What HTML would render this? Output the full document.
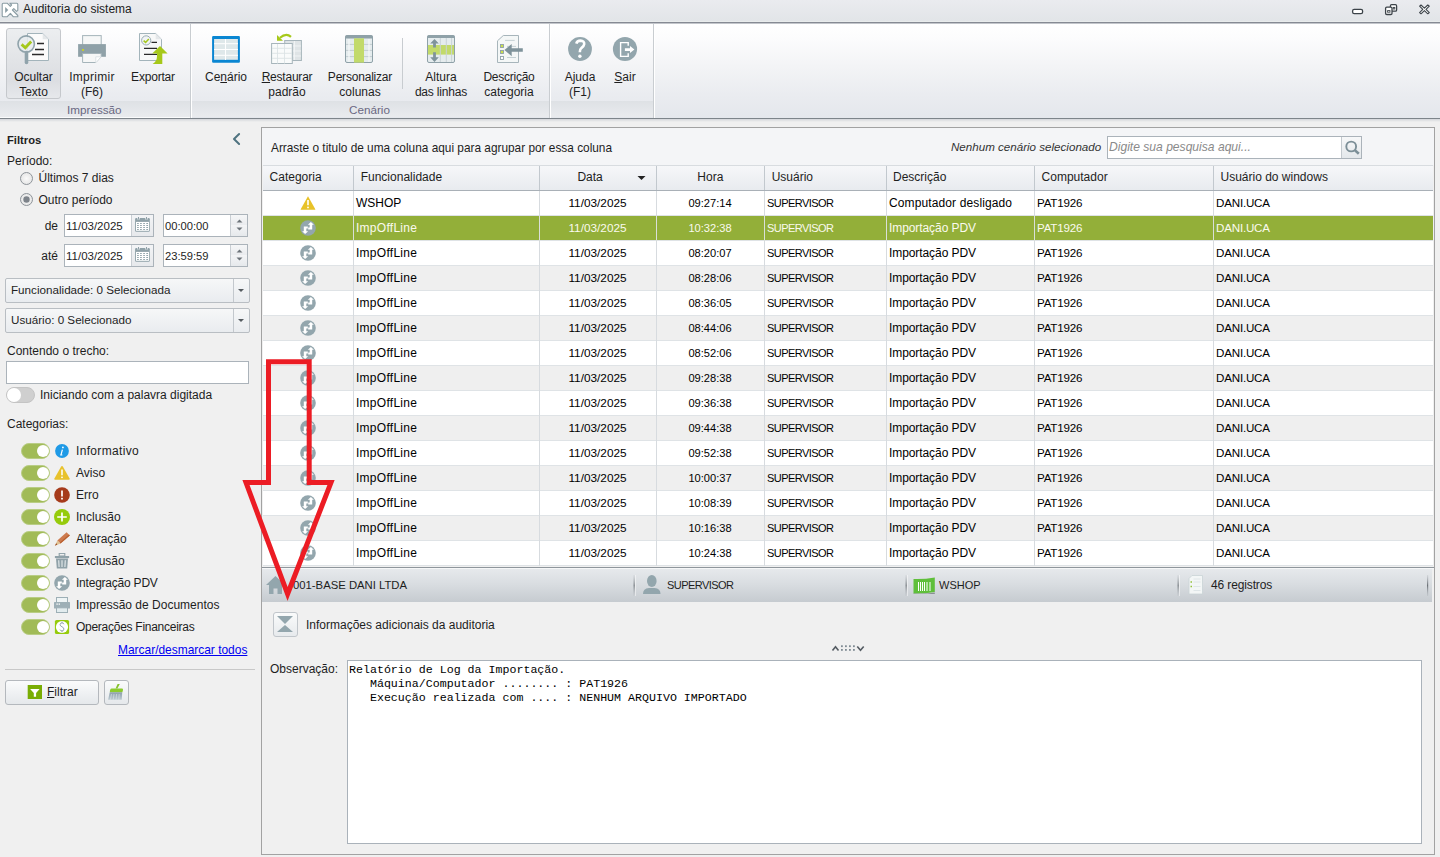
<!DOCTYPE html>
<html><head><meta charset="utf-8">
<style>
*{box-sizing:border-box;margin:0;padding:0}
html,body{width:1440px;height:857px;overflow:hidden;background:#f0f0f0;font-family:"Liberation Sans",sans-serif;font-size:11.7px;color:#1e1e1e}
.a{position:absolute}
.t{position:absolute;white-space:pre;line-height:15px;font-size:12px;margin-top:1px}
#title{left:0;top:0;width:1440px;height:22px;background:linear-gradient(#eaebef 0%,#e2e5e8 95%,#e9ecec 95%)}
#titleline{left:0;top:22px;width:1440px;height:2px;background:linear-gradient(#868a93 50%,#c3c6cb 50%)}
#ribbon{left:0;top:24px;width:1440px;height:94px;background:linear-gradient(#ffffff 0%,#fcfcfd 15%,#f3f4f6 45%,#eaecf0 75%,#e4e7ec 100%)}
#ribbonline{left:0;top:118px;width:1440px;height:1px;background:#7d848a}
#ribbonshade{left:0;top:119px;width:1440px;height:3px;background:linear-gradient(#d3d6da,#f0f0f0)}
.band{position:absolute;top:101px;height:16px;background:linear-gradient(#dee1e5,#e9ebee)}
.gsep{position:absolute;top:24px;height:94px;width:2px;background:linear-gradient(90deg,#c9cdd1 50%,#ffffff 50%)}
.rb{position:absolute;text-align:center;color:#222}
.glabel{position:absolute;top:102px;line-height:15px;color:#6a6882;white-space:pre;font-size:11.7px}
.u{text-decoration:underline}
</style></head><body>
<div id="title" class="a"></div>
<div id="titleline" class="a"></div>
<div id="ribbon" class="a"></div>
<div id="ribbonline" class="a"></div>
<div id="ribbonshade" class="a"></div>
<div class="band" style="left:0;width:190px"></div>
<div class="band" style="left:192px;width:357px"></div>
<div class="band" style="left:551px;width:102px"></div>
<div class="a" style="left:0;top:117px;width:190px;height:1px;background:#fafbfc"></div>
<div class="gsep" style="left:190px"></div>
<div class="gsep" style="left:549px"></div>
<div class="gsep" style="left:653px"></div>
<div class="glabel" style="left:67px">Impressão</div>
<div class="glabel" style="left:349px">Cenário</div>


<!-- pressed button -->
<div class="a" style="left:6px;top:28px;width:55px;height:71px;border:1px solid #c5c8cc;border-radius:3px;background:linear-gradient(#eceef0 0%,#e2e4e7 45%,#dcdee2 75%,#e6e8eb 100%)"></div>
<svg class="a" style="left:0;top:0" width="700" height="120" viewBox="0 0 700 120">
 <!-- title icon -->
 <g fill="#fff" stroke="#8a9ca4" stroke-width="1.1" stroke-linejoin="round">
  <path d="M3.2,3.2 H7.2 L10.3,6.3 L11.6,5 L9.8,3.2 H16.8 Q17.8,3.2 17.8,4.2 V10.3 L16.6,11.4 L13.8,8.6 L12.4,10 L17.8,15.5 V16.8 H13.4 L10.4,13.3 L7,16.8 H3.2 Q2.2,16.8 2.2,15.8 V4.2 Q2.2,3.2 3.2,3.2 Z"/>
 </g>
 <path d="M5.2,7 L8.3,10 L5.2,13 Z" fill="#8a9ca4"/>
 <!-- Ocultar texto icon -->
 <path d="M27.5,33.5 H42.7 L48.5,39.3 V60.5 H27.5 Z" fill="#fbfbfb" stroke="#a3b4bb" stroke-width="1"/>
 <path d="M42.7,33.5 V39.3 H48.5" fill="#e4e7e9" stroke="none"/>
 <path d="M37,43.5 H44 M35,49.5 H44 M32,54.5 H44" stroke="#2a2a2a" stroke-width="1.4"/>
 <circle cx="26.2" cy="44.1" r="8.2" fill="#e8ecee" fill-opacity="0.85" stroke="#90a3ab" stroke-width="1.6"/>
 <path d="M21.6,44.4 L25.3,47.8 L31.2,41.5" fill="none" stroke="#a5c81c" stroke-width="2.8"/>
 <path d="M26.5,52.6 V62.5" stroke="#90a3ab" stroke-width="3.6" stroke-linecap="round"/>
 <!-- printer -->
 <rect x="82.6" y="35.6" width="18.6" height="10" fill="#f6f7f7" stroke="#a5b4ba" stroke-width="1"/>
 <rect x="78.1" y="44.1" width="27.8" height="12.7" fill="#8fa1a8"/>
 <rect x="82" y="49" width="2" height="1.9" fill="#c6d02a"/>
 <path d="M82.6,53.5 H101.2 V56.8 L95.8,62.5 H82.6 Z" fill="#f6f7f7" stroke="#a5b4ba" stroke-width="1"/>
 <path d="M95.8,62.5 V56.8 H101.2" fill="#fff" stroke="#dde3e6" stroke-width="1"/>
 <!-- exportar -->
 <path d="M139.5,33.5 H155.7 L161.5,39.3 V60.5 H139.5 Z" fill="#f7f8f8" stroke="#a3b4bb" stroke-width="1"/>
 <path d="M155.7,33.5 V39.3 H161.5" fill="#e4e7e9" stroke="none"/>
 <circle cx="146.2" cy="40.4" r="4.6" fill="#f1f4f5" stroke="#9aacb3" stroke-width="1"/>
 <path d="M143.6,40.6 L145.6,42.4 L148.8,39" fill="none" stroke="#a5c81c" stroke-width="1.5"/>
 <path d="M151.5,42.4 H157 M144,48.4 H157 M144,54.3 H157" stroke="#2a2a2a" stroke-width="1.2"/>
 <path d="M152.2,53.6 L160,46 L167.6,53.6 H162.3 V64 H152.6 Q157,61 157,56.5 V53.6 Z" fill="#a6c81a"/>
 <!-- cenario -->
 <rect x="212.1" y="36" width="27.8" height="26.8" rx="1" fill="#0a86d2"/>
 <rect x="214.1" y="39" width="23.8" height="20.8" fill="#dfe8ea"/>
 <path d="M214,43.7 H238 M214,49.5 H238 M214,55.3 H238 M225.5,39 V60" stroke="#ffffff" stroke-width="1"/>
 <!-- restaurar -->
 <rect x="284.7" y="40.5" width="16.7" height="20" fill="#dfe4e6" stroke="#a7b5bb" stroke-width="1"/>
 <path d="M285,46 H301 M285,51 H301 M285,56 H301 M294.5,41 V60" stroke="#f4f6f7" stroke-width="0.8"/>
 <rect x="271.6" y="43.5" width="20.7" height="20" fill="#f9fbfb" stroke="#a7b5bb" stroke-width="1"/>
 <path d="M272,48.3 H292 M272,53.3 H292 M272,58.3 H292 M277.5,44 V63.5 M284.5,44 V63.5" stroke="#dbe3e5" stroke-width="0.9"/>
 <path d="M291,36.8 Q286,32.5 280,37.8" fill="none" stroke="#a6c81a" stroke-width="2.2"/>
 <path d="M277,35 V40.8 H283 Z" fill="#a6c81a"/>
 <!-- personalizar -->
 <rect x="345.5" y="35.5" width="27" height="27" rx="1.5" fill="#e5ecee" stroke="#8fa1a8" stroke-width="1"/>
 <rect x="345.5" y="35.5" width="27" height="3" fill="#8fa1a8"/>
 <path d="M346,44.4 H372 M346,50.4 H372 M346,56.6 H372" stroke="#c3cdd1" stroke-width="1"/>
 <path d="M349,39 V62 M369,39 V62" stroke="#f6f9f9" stroke-width="1.2"/>
 <rect x="354" y="38.3" width="10" height="24.3" fill="#c2da6a"/>
 <!-- small separator -->
 <rect x="402" y="38" width="1" height="51" fill="#c8ccd0"/>
 <!-- altura -->
 <rect x="427.5" y="35.5" width="27" height="27" rx="1.5" fill="#e5ecee" stroke="#8fa1a8" stroke-width="1"/>
 <rect x="427.5" y="35.5" width="27" height="2.5" fill="#8fa1a8"/>
 <rect x="428" y="45" width="26" height="9.6" fill="#c2da6a"/>
 <path d="M440.3,38 V62 M446.3,38 V62 M451.6,38 V62" stroke="#c9d3d6" stroke-width="1"/>
 <path d="M434.5,38.9 L438.8,43.4 H435.9 V47.5 H433.1 V43.4 H430.2 Z M434.5,61.9 L438.8,57.2 H435.9 V52.2 H433.1 V57.2 H430.2 Z" fill="#7f939b"/>
 <!-- descricao -->
 <path d="M503.3,35.5 H518.5 V62.5 H497.5 V40.8 Z" fill="#f4f7f7" stroke="#a7b5bb" stroke-width="1"/>
 <path d="M505,40.4 H514.7 M507,46.4 H516 M507,57.5 H516" stroke="#b9c6cb" stroke-width="0.8"/>
 <rect x="500.5" y="44.5" width="3" height="3" fill="#cbe04a" stroke="#8fa1a8" stroke-width="0.9"/>
 <rect x="500.5" y="50.5" width="3" height="3" fill="#cbe04a" stroke="#8fa1a8" stroke-width="0.9"/>
 <rect x="500.5" y="56.5" width="3" height="3" fill="#fff" stroke="#8fa1a8" stroke-width="0.9"/>
 <path d="M504.4,50 L511.7,44 V48.2 H522.8 V51.7 H511.7 V56.2 Z" fill="#7f939b"/>
 <!-- ajuda -->
 <circle cx="580" cy="49" r="11.9" fill="#93a6ad"/>
 <path d="M576.3,43.6 Q577,40.6 580.5,40.6 Q584.5,40.8 584.2,44.2 Q584,46.2 581.6,47.8 Q579.8,49.2 579.8,52.2" fill="none" stroke="#fff" stroke-width="2.6"/>
 <circle cx="579.9" cy="56.3" r="1.7" fill="#fff"/>
 <!-- sair -->
 <circle cx="625" cy="49" r="12.1" fill="#93a6ad"/>
 <path d="M628.2,45.8 V42.6 H620.6 V56.4 H628.2 V53.2" fill="none" stroke="#fff" stroke-width="1.4"/>
 <path d="M624.9,48.3 H630 V46 L634.4,49.6 L630,53.1 V50.9 H624.9 Z" fill="#fff"/>
</svg>
<!-- window controls -->
<svg class="a" style="left:1340px;top:0" width="100" height="22" viewBox="1340 0 100 22">
 <rect x="1352.6" y="9.4" width="10" height="4.2" rx="1.6" fill="#fff" stroke="#3c4349" stroke-width="1.3"/>
 <rect x="1390.4" y="4.7" width="6.2" height="6.4" rx="1.2" fill="#fff" stroke="#3c4349" stroke-width="1.3"/>
 <rect x="1393.2" y="7.4" width="1.6" height="1.6" fill="#fff" stroke="#3c4349" stroke-width="0.9"/>
 <rect x="1385.6" y="7.1" width="6.4" height="7.4" rx="1.2" fill="#fff" stroke="#3c4349" stroke-width="1.3"/>
 <rect x="1387.6" y="10.6" width="2.4" height="1.6" fill="#fff" stroke="#3c4349" stroke-width="0.9"/>
 <path d="M1419.6,6.2 L1421,5 L1424.4,8.1 L1427.8,5 L1429.3,6.2 L1426,9.4 L1429.3,12.6 L1427.8,13.8 L1424.4,10.7 L1421,13.8 L1419.6,12.6 L1422.8,9.4 Z" fill="#fff" stroke="#3c4349" stroke-width="1.1" stroke-linejoin="round"/>
</svg>
<!-- ribbon labels -->
<div class="t" style="left:0;top:69px;width:67px;text-align:center">Ocultar</div>
<div class="t" style="left:0;top:84px;width:67px;text-align:center">Texto</div>
<div class="t" style="left:62px;top:69px;width:60px;text-align:center;letter-spacing:0.28px">Imprimir</div>
<div class="t" style="left:62px;top:84px;width:60px;text-align:center">(F6)</div>
<div class="t" style="left:123px;top:69px;width:60px;text-align:center;letter-spacing:-0.2px">Exportar</div>
<div class="t" style="left:196px;top:69px;width:60px;text-align:center">Ce<span class="u">n</span>ário</div>
<div class="t" style="left:257px;top:69px;width:60px;text-align:center;letter-spacing:-0.22px"><span class="u">R</span>estaurar</div>
<div class="t" style="left:257px;top:84px;width:60px;text-align:center">padrão</div>
<div class="t" style="left:320px;top:69px;width:80px;text-align:center;letter-spacing:-0.2px">Personalizar</div>
<div class="t" style="left:320px;top:84px;width:80px;text-align:center">colunas</div>
<div class="t" style="left:406px;top:69px;width:70px;text-align:center">Altura</div>
<div class="t" style="left:406px;top:84px;width:70px;text-align:center;letter-spacing:-0.18px">das linhas</div>
<div class="t" style="left:474px;top:69px;width:70px;text-align:center;letter-spacing:-0.25px">Descrição</div>
<div class="t" style="left:474px;top:84px;width:70px;text-align:center">categoria</div>
<div class="t" style="left:555px;top:69px;width:50px;text-align:center">Ajuda</div>
<div class="t" style="left:555px;top:84px;width:50px;text-align:center">(F1)</div>
<div class="t" style="left:605px;top:69px;width:40px;text-align:center"><span class="u">S</span>air</div>


<!-- ============ LEFT PANEL ============ -->
<div class="t" style="left:7px;top:132px;font-weight:bold;font-size:11.2px">Filtros</div>
<svg class="a" style="left:228px;top:128px" width="20" height="22" viewBox="228 128 20 22"><path d="M239.1,134 L234,139 L239.1,144" fill="none" stroke="#4f7380" stroke-width="2" stroke-linecap="round" stroke-linejoin="round"/></svg>
<div class="t" style="left:7px;top:153px">Período:</div>
<svg class="a" style="left:18px;top:170px" width="18" height="40" viewBox="18 170 18 40">
 <defs><radialGradient id="rg1" cx="50%" cy="50%" r="50%"><stop offset="0" stop-color="#fafafa"/><stop offset="1" stop-color="#e6e6e6"/></radialGradient></defs>
 <circle cx="26.5" cy="178.5" r="6" fill="url(#rg1)" stroke="#8e949a" stroke-width="1"/>
 <circle cx="26.5" cy="199.5" r="6" fill="url(#rg1)" stroke="#8e949a" stroke-width="1"/>
 <circle cx="26.5" cy="199.5" r="3.2" fill="#7d838a"/>
</svg>
<div class="t" style="left:38.5px;top:170px">Últimos 7 dias</div>
<div class="t" style="left:38.5px;top:192px">Outro período</div>
<div class="t" style="left:0;top:218px;width:58px;text-align:right">de</div>
<div class="t" style="left:0;top:248px;width:58px;text-align:right">até</div>

<div class="a" style="left:64px;top:214px;width:90px;height:23px;border:1px solid #abb3ba;background:#fff"></div>
<div class="a" style="left:131px;top:215px;width:22px;height:21px;border-left:1px solid #c9ced3;background:linear-gradient(#f3f4f6,#e7e9ec)"></div>
<svg class="a" style="left:134px;top:216px" width="18" height="18" viewBox="0 0 18 18"><rect x="1.1" y="2.1" width="14.7" height="13.7" rx="1.2" fill="#8fa1a8"/><rect x="2" y="5.9" width="13" height="8.9" fill="#fff"/><path d="M3.3,2 h2.4 v1.6 h-2.4z M11.3,2 h2.4 v1.6 h-2.4z" fill="#eef0f2"/><path d="M4.5,1 V3.4 M12.5,1 V3.4" stroke="#8fa1a8" stroke-width="1"/><g fill="#8fa1a8"><rect x="3" y="6.9" width="1.9" height="1.1" rx="0.5"/><rect x="6" y="6.9" width="1.9" height="1.1" rx="0.5"/><rect x="9.1" y="6.9" width="1.9" height="1.1" rx="0.5"/><rect x="12.2" y="6.9" width="1.9" height="1.1" rx="0.5"/><rect x="3" y="8.9" width="1.9" height="1.1" rx="0.5"/><rect x="6" y="8.9" width="1.9" height="1.1" rx="0.5"/><rect x="9.1" y="8.9" width="1.9" height="1.1" rx="0.5"/><rect x="12.2" y="8.9" width="1.9" height="1.1" rx="0.5"/><rect x="3" y="10.9" width="1.9" height="1.1" rx="0.5"/><rect x="6" y="10.9" width="1.9" height="1.1" rx="0.5"/><rect x="9.1" y="10.9" width="1.9" height="1.1" rx="0.5"/><rect x="12.2" y="10.9" width="1.9" height="1.1" rx="0.5"/><rect x="3" y="13" width="1.9" height="1.1" rx="0.5"/><rect x="6" y="13" width="1.9" height="1.1" rx="0.5"/><rect x="9.1" y="13" width="1.9" height="1.1" rx="0.5"/><rect x="12.2" y="13" width="1.9" height="1.1" rx="0.5"/></g></svg>
<div class="t" style="left:66px;top:218px;font-size:11.5px;letter-spacing:0px">11/03/2025</div>
<div class="a" style="left:163px;top:214px;width:85px;height:23px;border:1px solid #abb3ba;background:#fff"></div>
<div class="a" style="left:230px;top:215px;width:17px;height:21px;border-left:1px solid #c9ced3;background:linear-gradient(#f5f6f7,#e9ebee 50%,#f3f4f6 50%,#e6e9ec)"></div>
<svg class="a" style="left:230px;top:214px" width="18" height="23" viewBox="0 0 18 23"><path d="M6.5,8.5 L9.5,5.5 L12.5,8.5 Z M6.5,13.5 L12.5,13.5 L9.5,16.5 Z" fill="#6e757b"/></svg>
<div class="t" style="left:165px;top:218px;font-size:11.2px">00:00:00</div>

<div class="a" style="left:64px;top:244px;width:90px;height:23px;border:1px solid #abb3ba;background:#fff"></div>
<div class="a" style="left:131px;top:245px;width:22px;height:21px;border-left:1px solid #c9ced3;background:linear-gradient(#f3f4f6,#e7e9ec)"></div>
<svg class="a" style="left:134px;top:246px" width="18" height="18" viewBox="0 0 18 18"><rect x="1.1" y="2.1" width="14.7" height="13.7" rx="1.2" fill="#8fa1a8"/><rect x="2" y="5.9" width="13" height="8.9" fill="#fff"/><path d="M3.3,2 h2.4 v1.6 h-2.4z M11.3,2 h2.4 v1.6 h-2.4z" fill="#eef0f2"/><path d="M4.5,1 V3.4 M12.5,1 V3.4" stroke="#8fa1a8" stroke-width="1"/><g fill="#8fa1a8"><rect x="3" y="6.9" width="1.9" height="1.1" rx="0.5"/><rect x="6" y="6.9" width="1.9" height="1.1" rx="0.5"/><rect x="9.1" y="6.9" width="1.9" height="1.1" rx="0.5"/><rect x="12.2" y="6.9" width="1.9" height="1.1" rx="0.5"/><rect x="3" y="8.9" width="1.9" height="1.1" rx="0.5"/><rect x="6" y="8.9" width="1.9" height="1.1" rx="0.5"/><rect x="9.1" y="8.9" width="1.9" height="1.1" rx="0.5"/><rect x="12.2" y="8.9" width="1.9" height="1.1" rx="0.5"/><rect x="3" y="10.9" width="1.9" height="1.1" rx="0.5"/><rect x="6" y="10.9" width="1.9" height="1.1" rx="0.5"/><rect x="9.1" y="10.9" width="1.9" height="1.1" rx="0.5"/><rect x="12.2" y="10.9" width="1.9" height="1.1" rx="0.5"/><rect x="3" y="13" width="1.9" height="1.1" rx="0.5"/><rect x="6" y="13" width="1.9" height="1.1" rx="0.5"/><rect x="9.1" y="13" width="1.9" height="1.1" rx="0.5"/><rect x="12.2" y="13" width="1.9" height="1.1" rx="0.5"/></g></svg>
<div class="t" style="left:66px;top:248px;font-size:11.5px;letter-spacing:0px">11/03/2025</div>
<div class="a" style="left:163px;top:244px;width:85px;height:23px;border:1px solid #abb3ba;background:#fff"></div>
<div class="a" style="left:230px;top:245px;width:17px;height:21px;border-left:1px solid #c9ced3;background:linear-gradient(#f5f6f7,#e9ebee 50%,#f3f4f6 50%,#e6e9ec)"></div>
<svg class="a" style="left:230px;top:244px" width="18" height="23" viewBox="0 0 18 23"><path d="M6.5,8.5 L9.5,5.5 L12.5,8.5 Z M6.5,13.5 L12.5,13.5 L9.5,16.5 Z" fill="#6e757b"/></svg>
<div class="t" style="left:165px;top:248px;font-size:11.2px">23:59:59</div>

<!-- combos -->
<div class="a" style="left:5px;top:278px;width:245px;height:25px;border:1px solid #b9bec3;border-radius:2px;background:linear-gradient(#f6f7f8,#e9ecef)"></div>
<div class="a" style="left:233px;top:279px;width:1px;height:23px;background:#c3c8cd"></div>
<svg class="a" style="left:234px;top:279px" width="15" height="23" viewBox="0 0 15 23"><path d="M4,10 H10 L7,13 Z" fill="#555b60"/></svg>
<div class="t" style="left:11px;top:281px;font-size:11.67px">Funcionalidade: 0 Selecionada</div>
<div class="a" style="left:5px;top:308px;width:245px;height:25px;border:1px solid #b9bec3;border-radius:2px;background:linear-gradient(#f6f7f8,#e9ecef)"></div>
<div class="a" style="left:233px;top:309px;width:1px;height:23px;background:#c3c8cd"></div>
<svg class="a" style="left:234px;top:309px" width="15" height="23" viewBox="0 0 15 23"><path d="M4,10 H10 L7,13 Z" fill="#555b60"/></svg>
<div class="t" style="left:11px;top:311px;font-size:11.67px">Usuário: 0 Selecionado</div>
<div class="t" style="left:7px;top:343px">Contendo o trecho:</div>
<div class="a" style="left:6px;top:361px;width:243px;height:23px;border:1px solid #abb3ba;background:#fff"></div>
<div class="a" style="left:6px;top:387px;width:29px;height:16px;border-radius:8px;background:#cfcfcf;border:1px solid #c4c4c4"></div>
<div class="a" style="left:7px;top:388px;width:14px;height:14px;border-radius:7px;background:#fff"></div>
<div class="t" style="left:40px;top:387px">Iniciando com a palavra digitada</div>
<div class="t" style="left:7px;top:416px">Categorias:</div>
<div class="a" style="left:21px;top:443px;width:29px;height:16px;border-radius:8px;background:#a1bb57;border:1px solid #b9cd85"></div>
<div class="a" style="left:36.8px;top:444.8px;width:12.4px;height:12.4px;border-radius:6.2px;background:#fff"></div>
<svg class="a" style="left:54px;top:443px" width="16" height="16" viewBox="0 0 16 16"><circle cx="8" cy="8" r="6.9" fill="#1f9ae6"/><circle cx="8.9" cy="4.4" r="0.9" fill="#fff"/><path d="M8.4,6.6 L7,11.8 M6.2,12 H8.4" stroke="#fff" stroke-width="1.2" fill="none"/></svg>
<div class="t" style="left:76px;top:443px;letter-spacing:0.33px">Informativo</div>
<div class="a" style="left:21px;top:465px;width:29px;height:16px;border-radius:8px;background:#a1bb57;border:1px solid #b9cd85"></div>
<div class="a" style="left:36.8px;top:466.8px;width:12.4px;height:12.4px;border-radius:6.2px;background:#fff"></div>
<svg class="a" style="left:54px;top:465px" width="16" height="16" viewBox="0 0 16 16"><path d="M8,1 Q8.6,1 9,1.7 L15.6,13.6 Q16,14.8 14.8,14.8 H1.2 Q0,14.8 0.4,13.6 L7,1.7 Q7.4,1 8,1 Z" fill="#e8c22c"/><path d="M8,4.6 V10.2" stroke="#fff" stroke-width="1.5"/><rect x="7.2" y="11.6" width="1.6" height="1.5" fill="#fff"/></svg>
<div class="t" style="left:76px;top:465px">Aviso</div>
<div class="a" style="left:21px;top:487px;width:29px;height:16px;border-radius:8px;background:#a1bb57;border:1px solid #b9cd85"></div>
<div class="a" style="left:36.8px;top:488.8px;width:12.4px;height:12.4px;border-radius:6.2px;background:#fff"></div>
<svg class="a" style="left:54px;top:487px" width="16" height="16" viewBox="0 0 16 16"><circle cx="8" cy="8" r="7.8" fill="#a63b1b"/><path d="M8,3.4 V9.4" stroke="#fff" stroke-width="1.7"/><rect x="7.1" y="10.8" width="1.8" height="1.7" fill="#fff"/></svg>
<div class="t" style="left:76px;top:487px">Erro</div>
<div class="a" style="left:21px;top:509px;width:29px;height:16px;border-radius:8px;background:#a1bb57;border:1px solid #b9cd85"></div>
<div class="a" style="left:36.8px;top:510.8px;width:12.4px;height:12.4px;border-radius:6.2px;background:#fff"></div>
<svg class="a" style="left:54px;top:509px" width="16" height="16" viewBox="0 0 16 16"><circle cx="8" cy="8" r="8" fill="#96cb0c"/><path d="M8,3.4 V12.6 M3.2,8 H12.8" stroke="#fff" stroke-width="1.7"/></svg>
<div class="t" style="left:76px;top:509px">Inclusão</div>
<div class="a" style="left:21px;top:531px;width:29px;height:16px;border-radius:8px;background:#a1bb57;border:1px solid #b9cd85"></div>
<div class="a" style="left:36.8px;top:532.8px;width:12.4px;height:12.4px;border-radius:6.2px;background:#fff"></div>
<svg class="a" style="left:54px;top:531px" width="16" height="16" viewBox="0 0 16 16"><path d="M12.6,1.2 L15.8,4.4 L6.5,12.6 L3.3,9.4 Z" fill="#cd7b4f"/><path d="M15.8,4.4 L6.5,12.6 L5.6,11.7 L15,3.6 Z" fill="#b9602f"/><path d="M3.3,9.4 L6.5,12.6 L0.9,14.8 Z" fill="#e0c294"/><path d="M0.9,14.8 L2.2,12.2 L3.4,13.4 Z" fill="#9a4a24"/></svg>
<div class="t" style="left:76px;top:531px">Alteração</div>
<div class="a" style="left:21px;top:553px;width:29px;height:16px;border-radius:8px;background:#a1bb57;border:1px solid #b9cd85"></div>
<div class="a" style="left:36.8px;top:554.8px;width:12.4px;height:12.4px;border-radius:6.2px;background:#fff"></div>
<svg class="a" style="left:54px;top:553px" width="16" height="16" viewBox="0 0 16 16"><rect x="5.2" y="0.4" width="5.6" height="2.6" fill="none" stroke="#8fa1a8" stroke-width="1.1"/><rect x="0.9" y="3" width="14.2" height="2.1" fill="#8fa1a8"/><path d="M2,5.6 H14 L13.2,15.5 H2.8 Z" fill="#8fa1a8"/><path d="M4.7,7.2 L5.1,14 M8,7.2 V14 M11.3,7.2 L10.9,14" stroke="#dfe6e8" stroke-width="1.2"/></svg>
<div class="t" style="left:76px;top:553px">Exclusão</div>
<div class="a" style="left:21px;top:575px;width:29px;height:16px;border-radius:8px;background:#a1bb57;border:1px solid #b9cd85"></div>
<div class="a" style="left:36.8px;top:576.8px;width:12.4px;height:12.4px;border-radius:6.2px;background:#fff"></div>
<svg class="a" style="left:54px;top:575px" width="16" height="16" viewBox="0 0 16 16"><circle cx="8" cy="8" r="7.8" fill="#93a6ad"/><path d="M7.8,4.7 L10.9,1.9 L13.9,4.7 H12.2 V9.4 H8.2 V7.6 H9.7 V4.7 Z" fill="#fff"/><path d="M8.2,11.3 L5.1,14.1 L2.1,11.3 H3.8 V6.6 H7.8 V8.4 H6.3 V11.3 Z" fill="#fff"/></svg>
<div class="t" style="left:76px;top:575px;letter-spacing:-0.22px">Integração PDV</div>
<div class="a" style="left:21px;top:597px;width:29px;height:16px;border-radius:8px;background:#a1bb57;border:1px solid #b9cd85"></div>
<div class="a" style="left:36.8px;top:598.8px;width:12.4px;height:12.4px;border-radius:6.2px;background:#fff"></div>
<svg class="a" style="left:54px;top:597px" width="16" height="16" viewBox="0 0 16 16"><rect x="2.5" y="0.5" width="11" height="5" fill="#eef4f5" stroke="#9dafb6" stroke-width="1"/><rect x="0" y="5" width="16" height="6.6" rx="0.6" fill="#9dafb6"/><rect x="2.5" y="10.8" width="11" height="4.7" fill="#e2ecee" stroke="#9dafb6" stroke-width="1"/><rect x="2.4" y="6.5" width="1.4" height="1.2" fill="#fff"/><rect x="4.6" y="6.5" width="1.4" height="1.2" fill="#fff"/></svg>
<div class="t" style="left:76px;top:597px">Impressão de Documentos</div>
<div class="a" style="left:21px;top:619px;width:29px;height:16px;border-radius:8px;background:#a1bb57;border:1px solid #b9cd85"></div>
<div class="a" style="left:36.8px;top:620.8px;width:12.4px;height:12.4px;border-radius:6.2px;background:#fff"></div>
<svg class="a" style="left:54px;top:619px" width="16" height="16" viewBox="0 0 16 16"><rect x="0.9" y="0.9" width="14.2" height="14.2" rx="1.6" fill="#96cb0c"/><circle cx="8" cy="8" r="6.1" fill="#fff"/><path d="M9.9,5.2 Q9.6,3.9 8,3.9 Q6.1,3.9 6.1,5.6 Q6.1,7 8,7.8 Q9.9,8.6 9.9,10.1 Q9.9,11.9 8,11.9 Q6.3,11.9 6,10.6 M8,2.6 V3.9 M8,11.9 V13.3" fill="none" stroke="#8a9ca4" stroke-width="0.9"/></svg>
<div class="t" style="left:76px;top:619px;letter-spacing:-0.27px">Operações Financeiras</div>

<div class="t" style="left:118px;top:642px;color:#0000f0;text-decoration:underline;font-size:11.95px">Marcar/desmarcar todos</div>
<div class="a" style="left:5px;top:669px;width:250px;height:1px;background:#c8c8c8"></div>
<div class="a" style="left:5px;top:680px;width:94px;height:25px;border:1px solid #b4b8bd;border-radius:3px;background:linear-gradient(#fafbfc,#e5e8eb)"></div>
<svg class="a" style="left:27px;top:685px" width="16" height="15" viewBox="0 0 16 15"><rect x="0.7" y="0" width="14.3" height="14" fill="#79ad04"/><path d="M3.1,4 H12.6 L9.1,8 V11.7 H6.8 V8 Z" fill="#fff"/></svg>
<div class="t" style="left:47px;top:684px"><span class="u">F</span>iltrar</div>
<div class="a" style="left:104px;top:680px;width:25px;height:25px;border:1px solid #b4b8bd;border-radius:3px;background:linear-gradient(#fafbfc,#e5e8eb)"></div>
<svg class="a" style="left:104px;top:680px" width="25" height="25" viewBox="0 0 25 25"><defs><linearGradient id="brg" x1="0" y1="0" x2="0" y2="1"><stop offset="0" stop-color="#8d9fab"/><stop offset="1" stop-color="#bccbd2"/></linearGradient></defs><path d="M13.6,4 H15.8 L13.4,8.6 H11.6 Z" fill="#86c22e"/><path d="M7.6,8.5 H18.2 Q19.2,8.8 19,10 L18.4,12.3 H5.8 Q5.9,8.8 7.6,8.5 Z" fill="#8ccb2e"/><path d="M5.8,12.3 H18.2 L17.8,19.8 H4.1 Z" fill="url(#brg)"/><path d="M7.5,14 L6.4,19.8 M10,14 L9.2,19.8 M12.6,14 L12,19.8 M15.2,14 L14.8,19.8" stroke="#dfe6ea" stroke-width="0.6"/></svg>


<!-- ============ GRID PANEL ============ -->
<div class="a" style="left:261px;top:127px;width:1174px;height:728px;border:1px solid #a2a2a2;background:#f0f0f0"></div>
<div class="a" style="left:262px;top:128px;width:1172px;height:37px;background:#f4f5f7"></div>
<div class="t" style="left:271px;top:140px;font-size:11.85px">Arraste o titulo de uma coluna aqui para agrupar por essa coluna</div>
<div class="t" style="left:951px;top:138px;font-style:italic;color:#333;font-size:11.6px">Nenhum cenário selecionado</div>
<div class="a" style="left:1107px;top:136px;width:255px;height:23px;border:1px solid #abb3ba;background:#fff"></div>
<div class="t" style="left:1109px;top:139px;font-style:italic;color:#8a8a8a;font-size:12.1px">Digite sua pesquisa aqui...</div>
<div class="a" style="left:1341px;top:137px;width:20px;height:21px;border-left:1px solid #c3c9ce;background:linear-gradient(#f7f8f9,#e4e8eb)"></div>
<svg class="a" style="left:1341px;top:136px" width="22" height="23" viewBox="0 0 22 23"><circle cx="10.2" cy="10.5" r="4.9" fill="none" stroke="#7c8f97" stroke-width="1.9"/><path d="M13.8,14.1 L17.8,17.8" stroke="#7c8f97" stroke-width="2.6"/></svg>
<!-- header -->
<div class="a" style="left:263px;top:165px;width:1170px;height:1px;background:#d8dce0"></div>
<div class="a" style="left:263px;top:166px;width:1170px;height:24px;background:linear-gradient(#f6f7f9,#e8ebef)"></div>
<div class="a" style="left:263px;top:190px;width:1170px;height:1px;background:#a9b0b7"></div>
<div class="a" style="left:353px;top:166px;width:1px;height:24px;background:#c2c8ce"></div>
<div class="a" style="left:539px;top:166px;width:1px;height:24px;background:#c2c8ce"></div>
<div class="a" style="left:656px;top:166px;width:1px;height:24px;background:#c2c8ce"></div>
<div class="a" style="left:764px;top:166px;width:1px;height:24px;background:#c2c8ce"></div>
<div class="a" style="left:886px;top:166px;width:1px;height:24px;background:#c2c8ce"></div>
<div class="a" style="left:1034px;top:166px;width:1px;height:24px;background:#c2c8ce"></div>
<div class="a" style="left:1213px;top:166px;width:1px;height:24px;background:#c2c8ce"></div>
<div class="t" style="left:269.6px;top:169px">Categoria</div>
<div class="t" style="left:360.7px;top:169px">Funcionalidade</div>
<div class="t" style="left:577.4px;top:169px">Data</div>
<div class="t" style="left:697.3px;top:169px">Hora</div>
<div class="t" style="left:771.7px;top:169px">Usuário</div>
<div class="t" style="left:893.0px;top:169px">Descrição</div>
<div class="t" style="left:1041.6px;top:169px">Computador</div>
<div class="t" style="left:1220.5px;top:169px">Usuário do windows</div>
<svg class="a" style="left:636px;top:174px" width="12" height="8" viewBox="0 0 12 8"><path d="M1.5,2 H9.5 L5.5,6 Z" fill="#222"/></svg>
<div class="a" style="left:263px;top:191px;width:1170px;height:24px;background:#ffffff"></div>
<div class="a" style="left:263px;top:215px;width:1170px;height:1px;background:#dfe3e6"></div>
<div class="a" style="left:353px;top:191px;width:1px;height:25px;background:#d7dbdf"></div>
<div class="a" style="left:539px;top:191px;width:1px;height:25px;background:#d7dbdf"></div>
<div class="a" style="left:656px;top:191px;width:1px;height:25px;background:#d7dbdf"></div>
<div class="a" style="left:764px;top:191px;width:1px;height:25px;background:#d7dbdf"></div>
<div class="a" style="left:886px;top:191px;width:1px;height:25px;background:#d7dbdf"></div>
<div class="a" style="left:1034px;top:191px;width:1px;height:25px;background:#d7dbdf"></div>
<div class="a" style="left:1213px;top:191px;width:1px;height:25px;background:#d7dbdf"></div>
<svg class="a" style="left:300px;top:195px" width="16" height="16" viewBox="0 0 16 16"><path d="M8,1.2 L15.3,14.2 Q15.5,14.8 14.9,14.8 H1.1 Q0.5,14.8 0.7,14.2 Z" fill="#e8c229"/><path d="M8,5 V10.3" stroke="#fff" stroke-width="1.6"/><circle cx="8" cy="12.4" r="0.9" fill="#fff"/></svg>
<div class="t" style="left:356px;top:195px;color:#000">WSHOP</div>
<div class="t" style="left:539px;top:195px;width:117px;text-align:center;color:#000;font-size:11.8px">11/03/2025</div>
<div class="t" style="left:656px;top:195px;width:108px;text-align:center;color:#000;font-size:11.1px">09:27:14</div>
<div class="t" style="left:767px;top:195px;color:#000;font-size:11px;letter-spacing:-0.55px">SUPERVISOR</div>
<div class="t" style="left:889px;top:195px;color:#000;letter-spacing:0.12px">Computador desligado</div>
<div class="t" style="left:1037px;top:194px;color:#000;font-size:11.6px;letter-spacing:-0.2px">PAT1926</div>
<div class="t" style="left:1216px;top:194px;color:#000;font-size:11.6px;letter-spacing:-0.2px">DANI.UCA</div>
<div class="a" style="left:263px;top:216px;width:1170px;height:24px;background:#93af39"></div>
<div class="a" style="left:263px;top:240px;width:1170px;height:1px;background:#dfe3e6"></div>
<div class="a" style="left:353px;top:216px;width:1px;height:25px;background:#dadfd8"></div>
<div class="a" style="left:539px;top:216px;width:1px;height:25px;background:#dadfd8"></div>
<div class="a" style="left:656px;top:216px;width:1px;height:25px;background:#dadfd8"></div>
<div class="a" style="left:764px;top:216px;width:1px;height:25px;background:#dadfd8"></div>
<div class="a" style="left:886px;top:216px;width:1px;height:25px;background:#dadfd8"></div>
<div class="a" style="left:1034px;top:216px;width:1px;height:25px;background:#dadfd8"></div>
<div class="a" style="left:1213px;top:216px;width:1px;height:25px;background:#dadfd8"></div>
<svg class="a" style="left:300px;top:220px" width="16" height="16" viewBox="0 0 16 16"><circle cx="8" cy="8" r="7.8" fill="#93a6ad"/><path d="M7.8,4.7 L10.9,1.9 L13.9,4.7 H12.2 V9.4 H8.2 V7.6 H9.7 V4.7 Z" fill="#fff"/><path d="M8.2,11.3 L5.1,14.1 L2.1,11.3 H3.8 V6.6 H7.8 V8.4 H6.3 V11.3 Z" fill="#fff"/></svg>
<div class="t" style="left:356px;top:220px;color:#fafaee;letter-spacing:0.27px">ImpOffLine</div>
<div class="t" style="left:539px;top:220px;width:117px;text-align:center;color:#fafaee;font-size:11.8px">11/03/2025</div>
<div class="t" style="left:656px;top:220px;width:108px;text-align:center;color:#fafaee;font-size:11.1px">10:32:38</div>
<div class="t" style="left:767px;top:220px;color:#fafaee;font-size:11px;letter-spacing:-0.55px">SUPERVISOR</div>
<div class="t" style="left:889px;top:220px;color:#fafaee;letter-spacing:-0.08px">Importação PDV</div>
<div class="t" style="left:1037px;top:219px;color:#fafaee;font-size:11.6px;letter-spacing:-0.2px">PAT1926</div>
<div class="t" style="left:1216px;top:219px;color:#fafaee;font-size:11.6px;letter-spacing:-0.2px">DANI.UCA</div>
<div class="a" style="left:263px;top:241px;width:1170px;height:24px;background:#ffffff"></div>
<div class="a" style="left:263px;top:265px;width:1170px;height:1px;background:#dfe3e6"></div>
<div class="a" style="left:353px;top:241px;width:1px;height:25px;background:#d7dbdf"></div>
<div class="a" style="left:539px;top:241px;width:1px;height:25px;background:#d7dbdf"></div>
<div class="a" style="left:656px;top:241px;width:1px;height:25px;background:#d7dbdf"></div>
<div class="a" style="left:764px;top:241px;width:1px;height:25px;background:#d7dbdf"></div>
<div class="a" style="left:886px;top:241px;width:1px;height:25px;background:#d7dbdf"></div>
<div class="a" style="left:1034px;top:241px;width:1px;height:25px;background:#d7dbdf"></div>
<div class="a" style="left:1213px;top:241px;width:1px;height:25px;background:#d7dbdf"></div>
<svg class="a" style="left:300px;top:245px" width="16" height="16" viewBox="0 0 16 16"><circle cx="8" cy="8" r="7.8" fill="#93a6ad"/><path d="M7.8,4.7 L10.9,1.9 L13.9,4.7 H12.2 V9.4 H8.2 V7.6 H9.7 V4.7 Z" fill="#fff"/><path d="M8.2,11.3 L5.1,14.1 L2.1,11.3 H3.8 V6.6 H7.8 V8.4 H6.3 V11.3 Z" fill="#fff"/></svg>
<div class="t" style="left:356px;top:245px;color:#000;letter-spacing:0.27px">ImpOffLine</div>
<div class="t" style="left:539px;top:245px;width:117px;text-align:center;color:#000;font-size:11.8px">11/03/2025</div>
<div class="t" style="left:656px;top:245px;width:108px;text-align:center;color:#000;font-size:11.1px">08:20:07</div>
<div class="t" style="left:767px;top:245px;color:#000;font-size:11px;letter-spacing:-0.55px">SUPERVISOR</div>
<div class="t" style="left:889px;top:245px;color:#000;letter-spacing:-0.08px">Importação PDV</div>
<div class="t" style="left:1037px;top:244px;color:#000;font-size:11.6px;letter-spacing:-0.2px">PAT1926</div>
<div class="t" style="left:1216px;top:244px;color:#000;font-size:11.6px;letter-spacing:-0.2px">DANI.UCA</div>
<div class="a" style="left:263px;top:266px;width:1170px;height:24px;background:#efefef"></div>
<div class="a" style="left:263px;top:290px;width:1170px;height:1px;background:#dfe3e6"></div>
<div class="a" style="left:353px;top:266px;width:1px;height:25px;background:#d7dbdf"></div>
<div class="a" style="left:539px;top:266px;width:1px;height:25px;background:#d7dbdf"></div>
<div class="a" style="left:656px;top:266px;width:1px;height:25px;background:#d7dbdf"></div>
<div class="a" style="left:764px;top:266px;width:1px;height:25px;background:#d7dbdf"></div>
<div class="a" style="left:886px;top:266px;width:1px;height:25px;background:#d7dbdf"></div>
<div class="a" style="left:1034px;top:266px;width:1px;height:25px;background:#d7dbdf"></div>
<div class="a" style="left:1213px;top:266px;width:1px;height:25px;background:#d7dbdf"></div>
<svg class="a" style="left:300px;top:270px" width="16" height="16" viewBox="0 0 16 16"><circle cx="8" cy="8" r="7.8" fill="#93a6ad"/><path d="M7.8,4.7 L10.9,1.9 L13.9,4.7 H12.2 V9.4 H8.2 V7.6 H9.7 V4.7 Z" fill="#fff"/><path d="M8.2,11.3 L5.1,14.1 L2.1,11.3 H3.8 V6.6 H7.8 V8.4 H6.3 V11.3 Z" fill="#fff"/></svg>
<div class="t" style="left:356px;top:270px;color:#000;letter-spacing:0.27px">ImpOffLine</div>
<div class="t" style="left:539px;top:270px;width:117px;text-align:center;color:#000;font-size:11.8px">11/03/2025</div>
<div class="t" style="left:656px;top:270px;width:108px;text-align:center;color:#000;font-size:11.1px">08:28:06</div>
<div class="t" style="left:767px;top:270px;color:#000;font-size:11px;letter-spacing:-0.55px">SUPERVISOR</div>
<div class="t" style="left:889px;top:270px;color:#000;letter-spacing:-0.08px">Importação PDV</div>
<div class="t" style="left:1037px;top:269px;color:#000;font-size:11.6px;letter-spacing:-0.2px">PAT1926</div>
<div class="t" style="left:1216px;top:269px;color:#000;font-size:11.6px;letter-spacing:-0.2px">DANI.UCA</div>
<div class="a" style="left:263px;top:291px;width:1170px;height:24px;background:#ffffff"></div>
<div class="a" style="left:263px;top:315px;width:1170px;height:1px;background:#dfe3e6"></div>
<div class="a" style="left:353px;top:291px;width:1px;height:25px;background:#d7dbdf"></div>
<div class="a" style="left:539px;top:291px;width:1px;height:25px;background:#d7dbdf"></div>
<div class="a" style="left:656px;top:291px;width:1px;height:25px;background:#d7dbdf"></div>
<div class="a" style="left:764px;top:291px;width:1px;height:25px;background:#d7dbdf"></div>
<div class="a" style="left:886px;top:291px;width:1px;height:25px;background:#d7dbdf"></div>
<div class="a" style="left:1034px;top:291px;width:1px;height:25px;background:#d7dbdf"></div>
<div class="a" style="left:1213px;top:291px;width:1px;height:25px;background:#d7dbdf"></div>
<svg class="a" style="left:300px;top:295px" width="16" height="16" viewBox="0 0 16 16"><circle cx="8" cy="8" r="7.8" fill="#93a6ad"/><path d="M7.8,4.7 L10.9,1.9 L13.9,4.7 H12.2 V9.4 H8.2 V7.6 H9.7 V4.7 Z" fill="#fff"/><path d="M8.2,11.3 L5.1,14.1 L2.1,11.3 H3.8 V6.6 H7.8 V8.4 H6.3 V11.3 Z" fill="#fff"/></svg>
<div class="t" style="left:356px;top:295px;color:#000;letter-spacing:0.27px">ImpOffLine</div>
<div class="t" style="left:539px;top:295px;width:117px;text-align:center;color:#000;font-size:11.8px">11/03/2025</div>
<div class="t" style="left:656px;top:295px;width:108px;text-align:center;color:#000;font-size:11.1px">08:36:05</div>
<div class="t" style="left:767px;top:295px;color:#000;font-size:11px;letter-spacing:-0.55px">SUPERVISOR</div>
<div class="t" style="left:889px;top:295px;color:#000;letter-spacing:-0.08px">Importação PDV</div>
<div class="t" style="left:1037px;top:294px;color:#000;font-size:11.6px;letter-spacing:-0.2px">PAT1926</div>
<div class="t" style="left:1216px;top:294px;color:#000;font-size:11.6px;letter-spacing:-0.2px">DANI.UCA</div>
<div class="a" style="left:263px;top:316px;width:1170px;height:24px;background:#efefef"></div>
<div class="a" style="left:263px;top:340px;width:1170px;height:1px;background:#dfe3e6"></div>
<div class="a" style="left:353px;top:316px;width:1px;height:25px;background:#d7dbdf"></div>
<div class="a" style="left:539px;top:316px;width:1px;height:25px;background:#d7dbdf"></div>
<div class="a" style="left:656px;top:316px;width:1px;height:25px;background:#d7dbdf"></div>
<div class="a" style="left:764px;top:316px;width:1px;height:25px;background:#d7dbdf"></div>
<div class="a" style="left:886px;top:316px;width:1px;height:25px;background:#d7dbdf"></div>
<div class="a" style="left:1034px;top:316px;width:1px;height:25px;background:#d7dbdf"></div>
<div class="a" style="left:1213px;top:316px;width:1px;height:25px;background:#d7dbdf"></div>
<svg class="a" style="left:300px;top:320px" width="16" height="16" viewBox="0 0 16 16"><circle cx="8" cy="8" r="7.8" fill="#93a6ad"/><path d="M7.8,4.7 L10.9,1.9 L13.9,4.7 H12.2 V9.4 H8.2 V7.6 H9.7 V4.7 Z" fill="#fff"/><path d="M8.2,11.3 L5.1,14.1 L2.1,11.3 H3.8 V6.6 H7.8 V8.4 H6.3 V11.3 Z" fill="#fff"/></svg>
<div class="t" style="left:356px;top:320px;color:#000;letter-spacing:0.27px">ImpOffLine</div>
<div class="t" style="left:539px;top:320px;width:117px;text-align:center;color:#000;font-size:11.8px">11/03/2025</div>
<div class="t" style="left:656px;top:320px;width:108px;text-align:center;color:#000;font-size:11.1px">08:44:06</div>
<div class="t" style="left:767px;top:320px;color:#000;font-size:11px;letter-spacing:-0.55px">SUPERVISOR</div>
<div class="t" style="left:889px;top:320px;color:#000;letter-spacing:-0.08px">Importação PDV</div>
<div class="t" style="left:1037px;top:319px;color:#000;font-size:11.6px;letter-spacing:-0.2px">PAT1926</div>
<div class="t" style="left:1216px;top:319px;color:#000;font-size:11.6px;letter-spacing:-0.2px">DANI.UCA</div>
<div class="a" style="left:263px;top:341px;width:1170px;height:24px;background:#ffffff"></div>
<div class="a" style="left:263px;top:365px;width:1170px;height:1px;background:#dfe3e6"></div>
<div class="a" style="left:353px;top:341px;width:1px;height:25px;background:#d7dbdf"></div>
<div class="a" style="left:539px;top:341px;width:1px;height:25px;background:#d7dbdf"></div>
<div class="a" style="left:656px;top:341px;width:1px;height:25px;background:#d7dbdf"></div>
<div class="a" style="left:764px;top:341px;width:1px;height:25px;background:#d7dbdf"></div>
<div class="a" style="left:886px;top:341px;width:1px;height:25px;background:#d7dbdf"></div>
<div class="a" style="left:1034px;top:341px;width:1px;height:25px;background:#d7dbdf"></div>
<div class="a" style="left:1213px;top:341px;width:1px;height:25px;background:#d7dbdf"></div>
<svg class="a" style="left:300px;top:345px" width="16" height="16" viewBox="0 0 16 16"><circle cx="8" cy="8" r="7.8" fill="#93a6ad"/><path d="M7.8,4.7 L10.9,1.9 L13.9,4.7 H12.2 V9.4 H8.2 V7.6 H9.7 V4.7 Z" fill="#fff"/><path d="M8.2,11.3 L5.1,14.1 L2.1,11.3 H3.8 V6.6 H7.8 V8.4 H6.3 V11.3 Z" fill="#fff"/></svg>
<div class="t" style="left:356px;top:345px;color:#000;letter-spacing:0.27px">ImpOffLine</div>
<div class="t" style="left:539px;top:345px;width:117px;text-align:center;color:#000;font-size:11.8px">11/03/2025</div>
<div class="t" style="left:656px;top:345px;width:108px;text-align:center;color:#000;font-size:11.1px">08:52:06</div>
<div class="t" style="left:767px;top:345px;color:#000;font-size:11px;letter-spacing:-0.55px">SUPERVISOR</div>
<div class="t" style="left:889px;top:345px;color:#000;letter-spacing:-0.08px">Importação PDV</div>
<div class="t" style="left:1037px;top:344px;color:#000;font-size:11.6px;letter-spacing:-0.2px">PAT1926</div>
<div class="t" style="left:1216px;top:344px;color:#000;font-size:11.6px;letter-spacing:-0.2px">DANI.UCA</div>
<div class="a" style="left:263px;top:366px;width:1170px;height:24px;background:#efefef"></div>
<div class="a" style="left:263px;top:390px;width:1170px;height:1px;background:#dfe3e6"></div>
<div class="a" style="left:353px;top:366px;width:1px;height:25px;background:#d7dbdf"></div>
<div class="a" style="left:539px;top:366px;width:1px;height:25px;background:#d7dbdf"></div>
<div class="a" style="left:656px;top:366px;width:1px;height:25px;background:#d7dbdf"></div>
<div class="a" style="left:764px;top:366px;width:1px;height:25px;background:#d7dbdf"></div>
<div class="a" style="left:886px;top:366px;width:1px;height:25px;background:#d7dbdf"></div>
<div class="a" style="left:1034px;top:366px;width:1px;height:25px;background:#d7dbdf"></div>
<div class="a" style="left:1213px;top:366px;width:1px;height:25px;background:#d7dbdf"></div>
<svg class="a" style="left:300px;top:370px" width="16" height="16" viewBox="0 0 16 16"><circle cx="8" cy="8" r="7.8" fill="#93a6ad"/><path d="M7.8,4.7 L10.9,1.9 L13.9,4.7 H12.2 V9.4 H8.2 V7.6 H9.7 V4.7 Z" fill="#fff"/><path d="M8.2,11.3 L5.1,14.1 L2.1,11.3 H3.8 V6.6 H7.8 V8.4 H6.3 V11.3 Z" fill="#fff"/></svg>
<div class="t" style="left:356px;top:370px;color:#000;letter-spacing:0.27px">ImpOffLine</div>
<div class="t" style="left:539px;top:370px;width:117px;text-align:center;color:#000;font-size:11.8px">11/03/2025</div>
<div class="t" style="left:656px;top:370px;width:108px;text-align:center;color:#000;font-size:11.1px">09:28:38</div>
<div class="t" style="left:767px;top:370px;color:#000;font-size:11px;letter-spacing:-0.55px">SUPERVISOR</div>
<div class="t" style="left:889px;top:370px;color:#000;letter-spacing:-0.08px">Importação PDV</div>
<div class="t" style="left:1037px;top:369px;color:#000;font-size:11.6px;letter-spacing:-0.2px">PAT1926</div>
<div class="t" style="left:1216px;top:369px;color:#000;font-size:11.6px;letter-spacing:-0.2px">DANI.UCA</div>
<div class="a" style="left:263px;top:391px;width:1170px;height:24px;background:#ffffff"></div>
<div class="a" style="left:263px;top:415px;width:1170px;height:1px;background:#dfe3e6"></div>
<div class="a" style="left:353px;top:391px;width:1px;height:25px;background:#d7dbdf"></div>
<div class="a" style="left:539px;top:391px;width:1px;height:25px;background:#d7dbdf"></div>
<div class="a" style="left:656px;top:391px;width:1px;height:25px;background:#d7dbdf"></div>
<div class="a" style="left:764px;top:391px;width:1px;height:25px;background:#d7dbdf"></div>
<div class="a" style="left:886px;top:391px;width:1px;height:25px;background:#d7dbdf"></div>
<div class="a" style="left:1034px;top:391px;width:1px;height:25px;background:#d7dbdf"></div>
<div class="a" style="left:1213px;top:391px;width:1px;height:25px;background:#d7dbdf"></div>
<svg class="a" style="left:300px;top:395px" width="16" height="16" viewBox="0 0 16 16"><circle cx="8" cy="8" r="7.8" fill="#93a6ad"/><path d="M7.8,4.7 L10.9,1.9 L13.9,4.7 H12.2 V9.4 H8.2 V7.6 H9.7 V4.7 Z" fill="#fff"/><path d="M8.2,11.3 L5.1,14.1 L2.1,11.3 H3.8 V6.6 H7.8 V8.4 H6.3 V11.3 Z" fill="#fff"/></svg>
<div class="t" style="left:356px;top:395px;color:#000;letter-spacing:0.27px">ImpOffLine</div>
<div class="t" style="left:539px;top:395px;width:117px;text-align:center;color:#000;font-size:11.8px">11/03/2025</div>
<div class="t" style="left:656px;top:395px;width:108px;text-align:center;color:#000;font-size:11.1px">09:36:38</div>
<div class="t" style="left:767px;top:395px;color:#000;font-size:11px;letter-spacing:-0.55px">SUPERVISOR</div>
<div class="t" style="left:889px;top:395px;color:#000;letter-spacing:-0.08px">Importação PDV</div>
<div class="t" style="left:1037px;top:394px;color:#000;font-size:11.6px;letter-spacing:-0.2px">PAT1926</div>
<div class="t" style="left:1216px;top:394px;color:#000;font-size:11.6px;letter-spacing:-0.2px">DANI.UCA</div>
<div class="a" style="left:263px;top:416px;width:1170px;height:24px;background:#efefef"></div>
<div class="a" style="left:263px;top:440px;width:1170px;height:1px;background:#dfe3e6"></div>
<div class="a" style="left:353px;top:416px;width:1px;height:25px;background:#d7dbdf"></div>
<div class="a" style="left:539px;top:416px;width:1px;height:25px;background:#d7dbdf"></div>
<div class="a" style="left:656px;top:416px;width:1px;height:25px;background:#d7dbdf"></div>
<div class="a" style="left:764px;top:416px;width:1px;height:25px;background:#d7dbdf"></div>
<div class="a" style="left:886px;top:416px;width:1px;height:25px;background:#d7dbdf"></div>
<div class="a" style="left:1034px;top:416px;width:1px;height:25px;background:#d7dbdf"></div>
<div class="a" style="left:1213px;top:416px;width:1px;height:25px;background:#d7dbdf"></div>
<svg class="a" style="left:300px;top:420px" width="16" height="16" viewBox="0 0 16 16"><circle cx="8" cy="8" r="7.8" fill="#93a6ad"/><path d="M7.8,4.7 L10.9,1.9 L13.9,4.7 H12.2 V9.4 H8.2 V7.6 H9.7 V4.7 Z" fill="#fff"/><path d="M8.2,11.3 L5.1,14.1 L2.1,11.3 H3.8 V6.6 H7.8 V8.4 H6.3 V11.3 Z" fill="#fff"/></svg>
<div class="t" style="left:356px;top:420px;color:#000;letter-spacing:0.27px">ImpOffLine</div>
<div class="t" style="left:539px;top:420px;width:117px;text-align:center;color:#000;font-size:11.8px">11/03/2025</div>
<div class="t" style="left:656px;top:420px;width:108px;text-align:center;color:#000;font-size:11.1px">09:44:38</div>
<div class="t" style="left:767px;top:420px;color:#000;font-size:11px;letter-spacing:-0.55px">SUPERVISOR</div>
<div class="t" style="left:889px;top:420px;color:#000;letter-spacing:-0.08px">Importação PDV</div>
<div class="t" style="left:1037px;top:419px;color:#000;font-size:11.6px;letter-spacing:-0.2px">PAT1926</div>
<div class="t" style="left:1216px;top:419px;color:#000;font-size:11.6px;letter-spacing:-0.2px">DANI.UCA</div>
<div class="a" style="left:263px;top:441px;width:1170px;height:24px;background:#ffffff"></div>
<div class="a" style="left:263px;top:465px;width:1170px;height:1px;background:#dfe3e6"></div>
<div class="a" style="left:353px;top:441px;width:1px;height:25px;background:#d7dbdf"></div>
<div class="a" style="left:539px;top:441px;width:1px;height:25px;background:#d7dbdf"></div>
<div class="a" style="left:656px;top:441px;width:1px;height:25px;background:#d7dbdf"></div>
<div class="a" style="left:764px;top:441px;width:1px;height:25px;background:#d7dbdf"></div>
<div class="a" style="left:886px;top:441px;width:1px;height:25px;background:#d7dbdf"></div>
<div class="a" style="left:1034px;top:441px;width:1px;height:25px;background:#d7dbdf"></div>
<div class="a" style="left:1213px;top:441px;width:1px;height:25px;background:#d7dbdf"></div>
<svg class="a" style="left:300px;top:445px" width="16" height="16" viewBox="0 0 16 16"><circle cx="8" cy="8" r="7.8" fill="#93a6ad"/><path d="M7.8,4.7 L10.9,1.9 L13.9,4.7 H12.2 V9.4 H8.2 V7.6 H9.7 V4.7 Z" fill="#fff"/><path d="M8.2,11.3 L5.1,14.1 L2.1,11.3 H3.8 V6.6 H7.8 V8.4 H6.3 V11.3 Z" fill="#fff"/></svg>
<div class="t" style="left:356px;top:445px;color:#000;letter-spacing:0.27px">ImpOffLine</div>
<div class="t" style="left:539px;top:445px;width:117px;text-align:center;color:#000;font-size:11.8px">11/03/2025</div>
<div class="t" style="left:656px;top:445px;width:108px;text-align:center;color:#000;font-size:11.1px">09:52:38</div>
<div class="t" style="left:767px;top:445px;color:#000;font-size:11px;letter-spacing:-0.55px">SUPERVISOR</div>
<div class="t" style="left:889px;top:445px;color:#000;letter-spacing:-0.08px">Importação PDV</div>
<div class="t" style="left:1037px;top:444px;color:#000;font-size:11.6px;letter-spacing:-0.2px">PAT1926</div>
<div class="t" style="left:1216px;top:444px;color:#000;font-size:11.6px;letter-spacing:-0.2px">DANI.UCA</div>
<div class="a" style="left:263px;top:466px;width:1170px;height:24px;background:#efefef"></div>
<div class="a" style="left:263px;top:490px;width:1170px;height:1px;background:#dfe3e6"></div>
<div class="a" style="left:353px;top:466px;width:1px;height:25px;background:#d7dbdf"></div>
<div class="a" style="left:539px;top:466px;width:1px;height:25px;background:#d7dbdf"></div>
<div class="a" style="left:656px;top:466px;width:1px;height:25px;background:#d7dbdf"></div>
<div class="a" style="left:764px;top:466px;width:1px;height:25px;background:#d7dbdf"></div>
<div class="a" style="left:886px;top:466px;width:1px;height:25px;background:#d7dbdf"></div>
<div class="a" style="left:1034px;top:466px;width:1px;height:25px;background:#d7dbdf"></div>
<div class="a" style="left:1213px;top:466px;width:1px;height:25px;background:#d7dbdf"></div>
<svg class="a" style="left:300px;top:470px" width="16" height="16" viewBox="0 0 16 16"><circle cx="8" cy="8" r="7.8" fill="#93a6ad"/><path d="M7.8,4.7 L10.9,1.9 L13.9,4.7 H12.2 V9.4 H8.2 V7.6 H9.7 V4.7 Z" fill="#fff"/><path d="M8.2,11.3 L5.1,14.1 L2.1,11.3 H3.8 V6.6 H7.8 V8.4 H6.3 V11.3 Z" fill="#fff"/></svg>
<div class="t" style="left:356px;top:470px;color:#000;letter-spacing:0.27px">ImpOffLine</div>
<div class="t" style="left:539px;top:470px;width:117px;text-align:center;color:#000;font-size:11.8px">11/03/2025</div>
<div class="t" style="left:656px;top:470px;width:108px;text-align:center;color:#000;font-size:11.1px">10:00:37</div>
<div class="t" style="left:767px;top:470px;color:#000;font-size:11px;letter-spacing:-0.55px">SUPERVISOR</div>
<div class="t" style="left:889px;top:470px;color:#000;letter-spacing:-0.08px">Importação PDV</div>
<div class="t" style="left:1037px;top:469px;color:#000;font-size:11.6px;letter-spacing:-0.2px">PAT1926</div>
<div class="t" style="left:1216px;top:469px;color:#000;font-size:11.6px;letter-spacing:-0.2px">DANI.UCA</div>
<div class="a" style="left:263px;top:491px;width:1170px;height:24px;background:#ffffff"></div>
<div class="a" style="left:263px;top:515px;width:1170px;height:1px;background:#dfe3e6"></div>
<div class="a" style="left:353px;top:491px;width:1px;height:25px;background:#d7dbdf"></div>
<div class="a" style="left:539px;top:491px;width:1px;height:25px;background:#d7dbdf"></div>
<div class="a" style="left:656px;top:491px;width:1px;height:25px;background:#d7dbdf"></div>
<div class="a" style="left:764px;top:491px;width:1px;height:25px;background:#d7dbdf"></div>
<div class="a" style="left:886px;top:491px;width:1px;height:25px;background:#d7dbdf"></div>
<div class="a" style="left:1034px;top:491px;width:1px;height:25px;background:#d7dbdf"></div>
<div class="a" style="left:1213px;top:491px;width:1px;height:25px;background:#d7dbdf"></div>
<svg class="a" style="left:300px;top:495px" width="16" height="16" viewBox="0 0 16 16"><circle cx="8" cy="8" r="7.8" fill="#93a6ad"/><path d="M7.8,4.7 L10.9,1.9 L13.9,4.7 H12.2 V9.4 H8.2 V7.6 H9.7 V4.7 Z" fill="#fff"/><path d="M8.2,11.3 L5.1,14.1 L2.1,11.3 H3.8 V6.6 H7.8 V8.4 H6.3 V11.3 Z" fill="#fff"/></svg>
<div class="t" style="left:356px;top:495px;color:#000;letter-spacing:0.27px">ImpOffLine</div>
<div class="t" style="left:539px;top:495px;width:117px;text-align:center;color:#000;font-size:11.8px">11/03/2025</div>
<div class="t" style="left:656px;top:495px;width:108px;text-align:center;color:#000;font-size:11.1px">10:08:39</div>
<div class="t" style="left:767px;top:495px;color:#000;font-size:11px;letter-spacing:-0.55px">SUPERVISOR</div>
<div class="t" style="left:889px;top:495px;color:#000;letter-spacing:-0.08px">Importação PDV</div>
<div class="t" style="left:1037px;top:494px;color:#000;font-size:11.6px;letter-spacing:-0.2px">PAT1926</div>
<div class="t" style="left:1216px;top:494px;color:#000;font-size:11.6px;letter-spacing:-0.2px">DANI.UCA</div>
<div class="a" style="left:263px;top:516px;width:1170px;height:24px;background:#efefef"></div>
<div class="a" style="left:263px;top:540px;width:1170px;height:1px;background:#dfe3e6"></div>
<div class="a" style="left:353px;top:516px;width:1px;height:25px;background:#d7dbdf"></div>
<div class="a" style="left:539px;top:516px;width:1px;height:25px;background:#d7dbdf"></div>
<div class="a" style="left:656px;top:516px;width:1px;height:25px;background:#d7dbdf"></div>
<div class="a" style="left:764px;top:516px;width:1px;height:25px;background:#d7dbdf"></div>
<div class="a" style="left:886px;top:516px;width:1px;height:25px;background:#d7dbdf"></div>
<div class="a" style="left:1034px;top:516px;width:1px;height:25px;background:#d7dbdf"></div>
<div class="a" style="left:1213px;top:516px;width:1px;height:25px;background:#d7dbdf"></div>
<svg class="a" style="left:300px;top:520px" width="16" height="16" viewBox="0 0 16 16"><circle cx="8" cy="8" r="7.8" fill="#93a6ad"/><path d="M7.8,4.7 L10.9,1.9 L13.9,4.7 H12.2 V9.4 H8.2 V7.6 H9.7 V4.7 Z" fill="#fff"/><path d="M8.2,11.3 L5.1,14.1 L2.1,11.3 H3.8 V6.6 H7.8 V8.4 H6.3 V11.3 Z" fill="#fff"/></svg>
<div class="t" style="left:356px;top:520px;color:#000;letter-spacing:0.27px">ImpOffLine</div>
<div class="t" style="left:539px;top:520px;width:117px;text-align:center;color:#000;font-size:11.8px">11/03/2025</div>
<div class="t" style="left:656px;top:520px;width:108px;text-align:center;color:#000;font-size:11.1px">10:16:38</div>
<div class="t" style="left:767px;top:520px;color:#000;font-size:11px;letter-spacing:-0.55px">SUPERVISOR</div>
<div class="t" style="left:889px;top:520px;color:#000;letter-spacing:-0.08px">Importação PDV</div>
<div class="t" style="left:1037px;top:519px;color:#000;font-size:11.6px;letter-spacing:-0.2px">PAT1926</div>
<div class="t" style="left:1216px;top:519px;color:#000;font-size:11.6px;letter-spacing:-0.2px">DANI.UCA</div>
<div class="a" style="left:263px;top:541px;width:1170px;height:24px;background:#ffffff"></div>
<div class="a" style="left:263px;top:565px;width:1170px;height:1px;background:#dfe3e6"></div>
<div class="a" style="left:353px;top:541px;width:1px;height:25px;background:#d7dbdf"></div>
<div class="a" style="left:539px;top:541px;width:1px;height:25px;background:#d7dbdf"></div>
<div class="a" style="left:656px;top:541px;width:1px;height:25px;background:#d7dbdf"></div>
<div class="a" style="left:764px;top:541px;width:1px;height:25px;background:#d7dbdf"></div>
<div class="a" style="left:886px;top:541px;width:1px;height:25px;background:#d7dbdf"></div>
<div class="a" style="left:1034px;top:541px;width:1px;height:25px;background:#d7dbdf"></div>
<div class="a" style="left:1213px;top:541px;width:1px;height:25px;background:#d7dbdf"></div>
<svg class="a" style="left:300px;top:545px" width="16" height="16" viewBox="0 0 16 16"><circle cx="8" cy="8" r="7.8" fill="#93a6ad"/><path d="M7.8,4.7 L10.9,1.9 L13.9,4.7 H12.2 V9.4 H8.2 V7.6 H9.7 V4.7 Z" fill="#fff"/><path d="M8.2,11.3 L5.1,14.1 L2.1,11.3 H3.8 V6.6 H7.8 V8.4 H6.3 V11.3 Z" fill="#fff"/></svg>
<div class="t" style="left:356px;top:545px;color:#000;letter-spacing:0.27px">ImpOffLine</div>
<div class="t" style="left:539px;top:545px;width:117px;text-align:center;color:#000;font-size:11.8px">11/03/2025</div>
<div class="t" style="left:656px;top:545px;width:108px;text-align:center;color:#000;font-size:11.1px">10:24:38</div>
<div class="t" style="left:767px;top:545px;color:#000;font-size:11px;letter-spacing:-0.55px">SUPERVISOR</div>
<div class="t" style="left:889px;top:545px;color:#000;letter-spacing:-0.08px">Importação PDV</div>
<div class="t" style="left:1037px;top:544px;color:#000;font-size:11.6px;letter-spacing:-0.2px">PAT1926</div>
<div class="t" style="left:1216px;top:544px;color:#000;font-size:11.6px;letter-spacing:-0.2px">DANI.UCA</div>

<!-- status bar -->
<div class="a" style="left:262px;top:567px;width:1172px;height:1px;background:#8f969c"></div>
<div class="a" style="left:262px;top:568px;width:1172px;height:1px;background:#f6f7f8"></div>
<div class="a" style="left:262px;top:569px;width:1170px;height:33px;background:linear-gradient(#e6e9ec,#d9dde1 45%,#c6cbd0)"></div>
<svg class="a" style="left:262px;top:569px" width="1172" height="33" viewBox="262 569 1172 33">
 <defs><linearGradient id="sepg" x1="0" y1="0" x2="0" y2="1"><stop offset="0" stop-color="#9aa0a6" stop-opacity="0.2"/><stop offset="0.5" stop-color="#6c7278"/><stop offset="1" stop-color="#9aa0a6" stop-opacity="0.2"/></linearGradient></defs>
 <path d="M275.5,576 L266,585 H269 V594 H273.5 V588.5 H277.5 V594 H282 V585 H285 Z" fill="#93a6ad"/>
 <rect x="633.6" y="575" width="1.2" height="21" fill="url(#sepg)"/><rect x="634.8" y="575" width="1" height="21" fill="#fff" opacity="0.6"/>
 <ellipse cx="651.8" cy="581" rx="4.8" ry="6" fill="#93a6ad"/>
 <path d="M643,594 Q643,588.5 649,588 H654.5 Q660.5,588.5 660.5,594 Z" fill="#93a6ad"/>
 <rect x="905.6" y="575" width="1.2" height="21" fill="url(#sepg)"/><rect x="906.8" y="575" width="1" height="21" fill="#fff" opacity="0.6"/>
 <path d="M913.5,579 Q924,579.5 934.8,577.4 V592 Q924,593.8 913.5,593.5 Z" fill="#5fbf3a"/>
 <path d="M913.5,593.5 Q924,594.5 934.8,592.5 V594 H913.5 Z" fill="#8a8f93"/>
 <path d="M918.5,582 V591 M920.5,582 V591 M922.5,582 V591 M924.5,582 V591 M927,582 V591 M930,582 V591" stroke="#fff" stroke-width="1"/>
 <rect x="1177.6" y="575" width="1.2" height="21" fill="url(#sepg)"/><rect x="1178.8" y="575" width="1" height="21" fill="#fff" opacity="0.6"/>
 <path d="M1192,575.5 H1202.5 V594 H1189 V578.5 Z" fill="#f3f6f6" stroke="#c9d3d6" stroke-width="0.8"/>
 <path d="M1190.5,582 h1.5 M1190.5,586.5 h1.5" stroke="#93c23a" stroke-width="1.3"/>
 <path d="M1193.5,579 H1200.5 M1193.5,582 H1200.5 M1193.5,586.5 H1200.5 M1193.5,590.5 H1200.5" stroke="#d9e2e4" stroke-width="0.8"/>
 <rect x="1427" y="575" width="1.2" height="21" fill="url(#sepg)"/>
</svg>
<div class="t" style="left:293px;top:577px;font-size:11.3px">001-BASE DANI LTDA</div>
<div class="t" style="left:667px;top:577px;font-size:11px;letter-spacing:-0.55px">SUPERVISOR</div>
<div class="t" style="left:939px;top:577px;font-size:11px">WSHOP</div>
<div class="t" style="left:1211px;top:577px;letter-spacing:-0.13px">46 registros</div>
<!-- details -->
<div class="a" style="left:273px;top:612px;width:25px;height:25px;border:1px solid #c1c6cb;border-radius:3px;background:linear-gradient(#fafbfb,#e7eaed)"></div>
<svg class="a" style="left:273px;top:612px" width="25" height="25" viewBox="0 0 25 25"><path d="M4,4 H20 L12,12 Z M4,20 H20 L12,13 Z" fill="#93a6ad"/></svg>
<div class="t" style="left:306px;top:617px">Informações adicionais da auditoria</div>
<svg class="a" style="left:828px;top:642px" width="40" height="12" viewBox="828 642 40 12"><path d="M832.5,650.5 L835.5,646.8 L838.5,650.5" fill="none" stroke="#555c63" stroke-width="1.6"/><g fill="#7f8b93"><rect x="841" y="645.3" width="1.8" height="1.8"/><rect x="845" y="645.3" width="1.8" height="1.8"/><rect x="849" y="645.3" width="1.8" height="1.8"/><rect x="853" y="645.3" width="1.8" height="1.8"/><rect x="841" y="649" width="1.8" height="1.8"/><rect x="845" y="649" width="1.8" height="1.8"/><rect x="849" y="649" width="1.8" height="1.8"/><rect x="853" y="649" width="1.8" height="1.8"/></g><path d="M857.3,646.5 L860.5,650.2 L863.7,646.5" fill="none" stroke="#555c63" stroke-width="1.6"/></svg>
<div class="t" style="left:270px;top:661px">Observação:</div>
<div class="a" style="left:347px;top:660px;width:1075px;height:184px;border:1px solid #aab2ba;background:#fff"></div>
<div class="a" style="left:349px;top:663px;font-family:'Liberation Mono',monospace;font-size:11.63px;line-height:14px;white-space:pre;color:#000">Relatório de Log da Importação.
   Máquina/Computador ........ : PAT1926
   Execução realizada com .... : NENHUM ARQUIVO IMPORTADO</div>
<!-- red arrow -->
<svg class="a" style="left:0;top:0" width="1440" height="857" viewBox="0 0 1440 857"><path d="M268.5,361.7 H309.2 V482.6 H331 L287.6,594 L246,482.6 H268.5 Z" fill="none" stroke="#ec1c24" stroke-width="5" stroke-linejoin="miter" stroke-miterlimit="6"/></svg>

<!-- title text -->
<div class="t" style="left:23px;top:1px;font-size:12px;color:#222">Auditoria do sistema</div>

</body></html>
